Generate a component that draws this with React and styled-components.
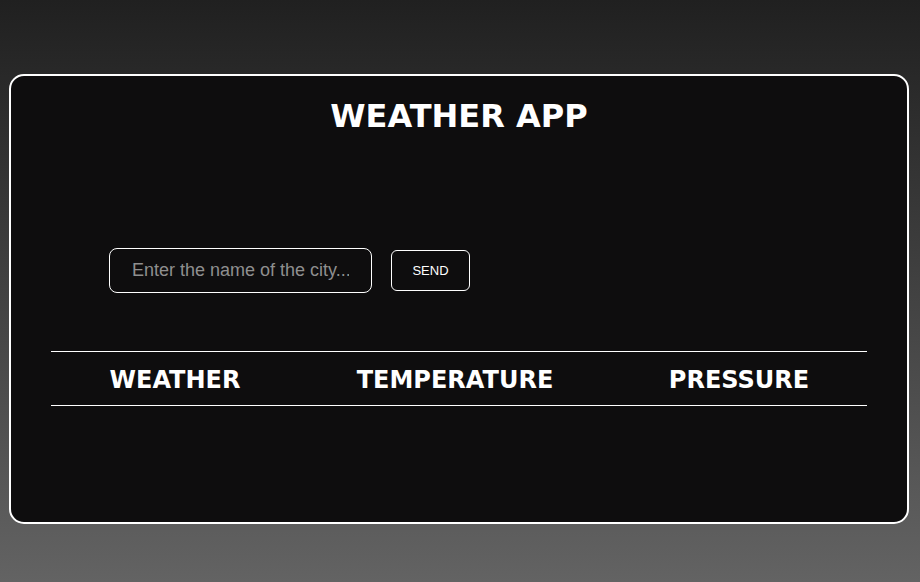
import React from "react";
import styled, { createGlobalStyle } from "styled-components";

const GlobalStyle = createGlobalStyle`
  html, body {
    margin: 0;
    height: 100%;
  }
  body {
    background: linear-gradient(180deg, #202020 0%, #636363 100%);
    font-family: "DejaVu Sans", Verdana, sans-serif;
    overflow: hidden;
  }
`;

const Page = styled.div`
  height: 582px;
  padding: 74px 0 0 9px;
  box-sizing: border-box;
`;

const Card = styled.div`
  width: 900px;
  height: 450px;
  box-sizing: border-box;
  background: #0e0d0e;
  border: 2px solid #ffffff;
  border-radius: 15px;
  padding: 22px 40px 0;
`;

const Title = styled.h1`
  margin: 0;
  text-align: center;
  color: #ffffff;
  font-size: 32px;
  font-weight: bold;
  line-height: 37px;
`;

const SearchRow = styled.form`
  display: flex;
  align-items: center;
  gap: 19px;
  margin: 113px 0 0 58px;
`;

const CityInput = styled.input`
  width: 263px;
  height: 45px;
  box-sizing: border-box;
  background: transparent;
  border: 1px solid #ffffff;
  border-radius: 8px;
  padding: 0 22px;
  color: #ffffff;
  font-family: "Liberation Sans", Arial, sans-serif;
  font-size: 18px;
  outline: none;

  &::placeholder {
    color: #8f8f8f;
  }
`;

const SendButton = styled.button`
  width: 79px;
  height: 41px;
  background: transparent;
  border: 1px solid #ffffff;
  border-radius: 6px;
  color: #ffffff;
  font-family: "Liberation Sans", Arial, sans-serif;
  font-size: 13px;
  cursor: pointer;
`;

const Table = styled.div`
  display: grid;
  grid-template-columns: 248px 312px 256px;
  width: 816px;
  margin-top: 58px;
  border-top: 1px solid #ffffff;
  border-bottom: 1px solid #ffffff;
`;

const HeadCell = styled.div`
  height: 53px;
  display: flex;
  align-items: center;
  justify-content: center;
  color: #ffffff;
  font-size: 24px;
  font-weight: bold;
  padding-top: 2px;
  box-sizing: border-box;
`;

export default function App() {
  return (
    <>
      <GlobalStyle />
      <Page>
        <Card>
          <Title>WEATHER APP</Title>
          <SearchRow onSubmit={(e) => e.preventDefault()}>
            <CityInput placeholder="Enter the name of the city..." />
            <SendButton type="submit">SEND</SendButton>
          </SearchRow>
          <Table>
            <HeadCell>WEATHER</HeadCell>
            <HeadCell>TEMPERATURE</HeadCell>
            <HeadCell>PRESSURE</HeadCell>
          </Table>
        </Card>
      </Page>
    </>
  );
}
